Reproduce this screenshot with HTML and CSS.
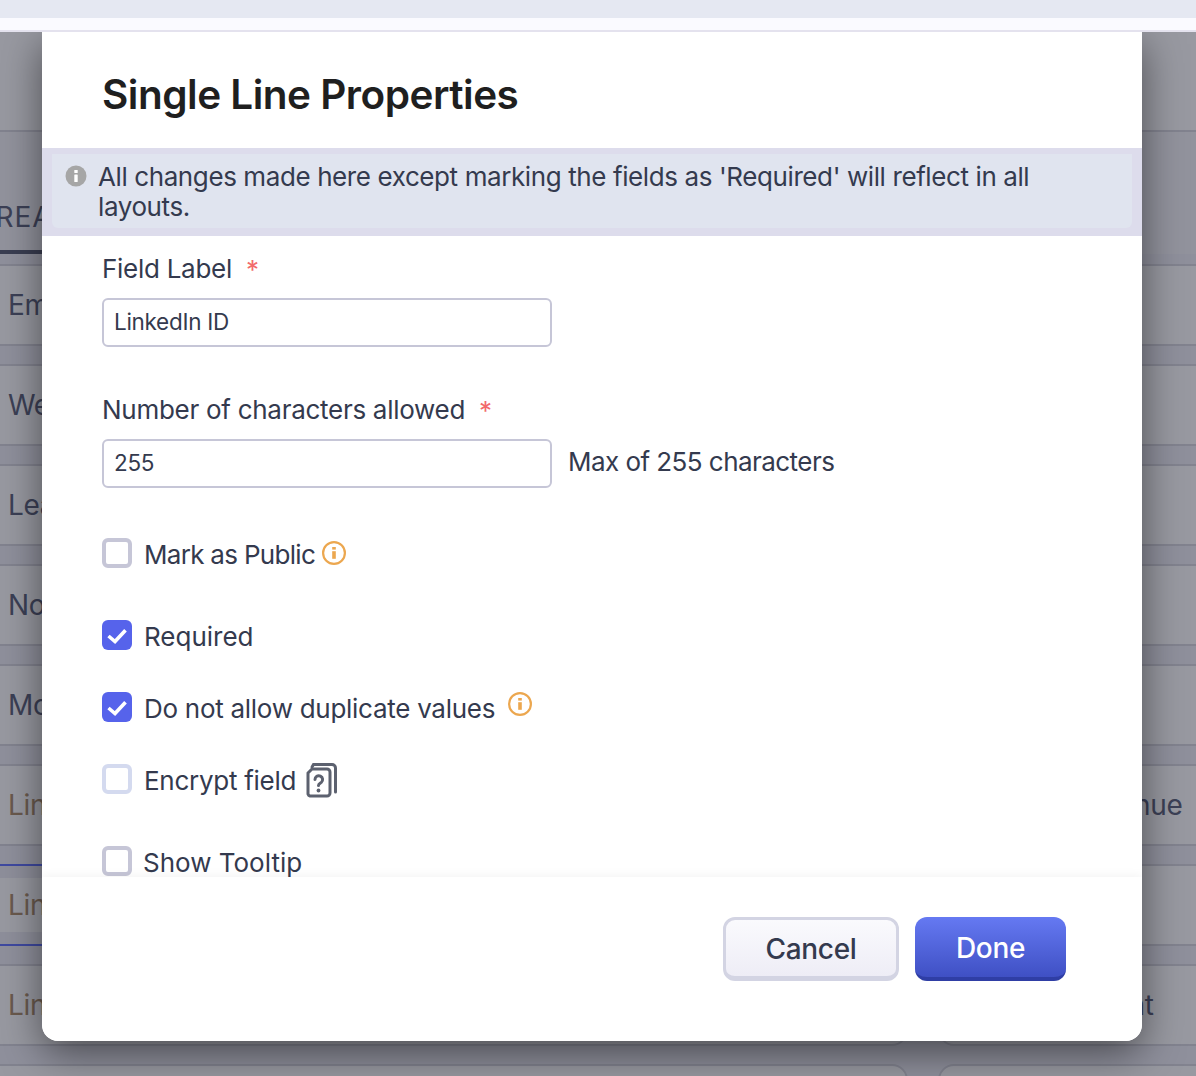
FILE: index.html
```html
<!DOCTYPE html>
<html lang="en">
<head>
<meta charset="utf-8">
<title>Single Line Properties</title>
<link rel="stylesheet" href="styles.css">
</head>
<body>
<div class="page">
  <div class="topbar"><div class="topbar-main"></div><div class="topbar-sub"></div></div>
  <div class="app">
    <div class="app-head"></div>
    <div class="tabs"><span class="tab">CREATE</span></div>
    <div class="grid">
      <div class="card"><span class="card-text">Email</span></div>
      <div class="card"></div>
      <div class="card"><span class="card-text">Website</span></div>
      <div class="card"></div>
      <div class="card"><span class="card-text">Lead Source</span></div>
      <div class="card"></div>
      <div class="card"><span class="card-text">Notes</span></div>
      <div class="card"></div>
      <div class="card"><span class="card-text">Mobile</span></div>
      <div class="card"></div>
      <div class="card"><span class="card-text link">Linked Deal</span></div>
      <div class="card"><span class="card-text">Annual Revenue</span></div>
      <div class="card active"><span class="card-chip"><span class="card-text link">LinkedIn ID</span></span></div>
      <div class="card"></div>
      <div class="card"><span class="card-text link">Linked Lead</span></div>
      <div class="card"><span class="card-text">Bank Account</span></div>
      <div class="card"></div>
      <div class="card"></div>
    </div>
  </div>
  <div class="overlay"></div>
  <div class="modal">
    <header class="modal-head"><h1 class="modal-title">Single Line Properties</h1></header>
    <div class="banner">
      <div class="banner-inner">
        <svg class="banner-icon" viewBox="0 0 22 22" aria-hidden="true"><circle cx="11" cy="11" r="10.5" fill="#a6a6a6"/><rect x="9.3" y="5" width="3.4" height="3" rx=".6" fill="#fff"/><rect x="9.3" y="9.5" width="3.4" height="7.5" rx=".6" fill="#fff"/></svg>
        <p class="banner-text">All changes made here except marking the fields as 'Required' will reflect in all layouts.</p>
      </div>
    </div>
    <div class="modal-body">
      <div class="field-label">Field Label<span class="star">*</span></div>
      <div class="field-row"><div class="input">LinkedIn ID</div></div>
      <div class="field-label second">Number of characters allowed<span class="star">*</span></div>
      <div class="field-row"><div class="input">255</div><span class="hint">Max of 255 characters</span></div>

      <div class="check-row gap-public">
        <span class="box"></span><span class="check-text tight">Mark as Public</span>
        <svg class="info info-public" viewBox="0 0 24 24" aria-hidden="true"><circle cx="12" cy="12" r="10.9" fill="none" stroke="#eca74f" stroke-width="2.2"/><rect x="10.2" y="6" width="3.6" height="2.6" fill="#eca74f"/><rect x="10.2" y="10.2" width="3.6" height="7.6" fill="#eca74f"/></svg>
      </div>
      <div class="check-row gap-required">
        <span class="box on"><svg viewBox="0 0 30 30" aria-hidden="true"><path d="M6.500 16 13 21.500 23.500 10.200" fill="none" stroke="#fff" stroke-width="3.600"/></svg></span><span class="check-text loose">Required</span>
      </div>
      <div class="check-row gap-small">
        <span class="box on"><svg viewBox="0 0 30 30" aria-hidden="true"><path d="M6.500 16 13 21.500 23.500 10.200" fill="none" stroke="#fff" stroke-width="3.600"/></svg></span><span class="check-text">Do not allow duplicate values</span>
        <svg class="info info-dup" viewBox="0 0 24 24" aria-hidden="true"><circle cx="12" cy="12" r="10.9" fill="none" stroke="#eca74f" stroke-width="2.2"/><rect x="10.2" y="6" width="3.6" height="2.6" fill="#eca74f"/><rect x="10.2" y="10.2" width="3.6" height="7.6" fill="#eca74f"/></svg>
      </div>
      <div class="check-row gap-small">
        <span class="box soft"></span><span class="check-text">Encrypt field</span>
        <svg class="help" viewBox="0 0 32 36" aria-hidden="true"><g fill="none" stroke="#5c616f" stroke-width="3" stroke-linecap="round"><path d="M3 11 7 7H22a3 3 0 0 1 3 3V31a3 3 0 0 1-3 3H5a3 3 0 0 1-2-2V11Z"/><path d="M7 5 8.500 2.500H27a3.500 3.500 0 0 1 3.500 3.500V30"/><path d="M10 17.500a3.800 3.800 0 1 1 6.300 2.900c-1.500 1.100-2.800 1.600-2.800 3.200"/></g><circle cx="13.500" cy="28.500" r="1.900" fill="#5c616f"/></svg>
      </div>
      <div class="check-row gap-required">
        <span class="box"></span><span class="check-text tooltip loose">Show Tooltip</span>
      </div>
    </div>
    <footer class="modal-foot">
      <button class="btn btn-cancel" type="button">Cancel</button>
      <button class="btn btn-done" type="button">Done</button>
    </footer>
  </div>
</div>
</body>
</html>
```
FILE: styles.css
```css
* { box-sizing: border-box; }
html, body { margin: 0; padding: 0; height: 100%; }
body { font-family: Inter, "Noto Sans", sans-serif; color: #343a4e; background: #fff; }

.page { position: relative; width: 1196px; height: 1076px; overflow: hidden; }

.topbar { position: relative; z-index: 3; height: 32px; background: #fafaff; border-bottom: 2px solid #e4e2ee; }
.topbar-main { height: 18px; background: #e5e8f2; }

.app { height: 1044px; overflow: hidden; background: #ececf4; color: #464d68; font-size: 28px; letter-spacing: -.3px; }
.app-head { height: 100px; background: #fff; border-bottom: 2px solid #d2d2da; }
.tabs { height: 122px; margin-left: -60px; background: #f2f2f6; display: flex; align-items: flex-end; }
.tab { padding: 0 8px 16px 34px; height: 122px; display: flex; align-items: flex-end; border-bottom: 4px solid #424860; letter-spacing: 1px; }
.grid { margin: 10px 0 0 -27px; width: 1900px; display: grid; grid-template-columns: 935px 935px; column-gap: 30px; row-gap: 20px; }
.card { height: 82px; margin-bottom: -2px; background: #fff; border: 2px solid #d2d2da; border-radius: 0 16px 16px 0; display: flex; align-items: center; padding-left: 33px; }
.card:nth-child(even) { border-radius: 16px 0 0 16px; }
.card.active { background: #eaeaf2; border-color: #4c60ff; padding-left: 0; }
.card-chip { display: flex; align-items: center; width: 100%; height: 54px; padding-left: 33px; background: #fff; border-radius: 10px; }
.card-text { line-height: 30px; }
.card-text.link { color: #a28058; }

.overlay { position: absolute; left: 0; right: 0; top: 32px; bottom: 0; z-index: 1; background: rgba(50, 52, 68, .5); }

.modal { position: absolute; z-index: 2; left: 42px; top: 32px; width: 1100px; height: 1009px; background: #fff; border-radius: 0 0 16px 16px; box-shadow: 0 12px 40px rgba(0, 0, 0, .5); display: flex; flex-direction: column; }

.modal-head { height: 116px; padding: 8px 60px 0; display: flex; align-items: center; flex: none; }
.modal-title { margin: 0; font-size: 40.5px; font-weight: 600; letter-spacing: -.5px; color: #1f1f1f; }

.banner { flex: none; height: 88px; padding: 6px 10px 8px; background: #dddcec; }
.banner-inner { height: 74px; background: #e0e4ef; border-radius: 0 0 6px 6px; padding: 8px 46px 0 13px; display: flex; align-items: flex-start; }
.banner-icon { width: 22px; height: 22px; flex: none; margin-top: 3px; margin-right: 11px; }
.banner-text { margin: 0; font-size: 26px; line-height: 30px; letter-spacing: -.4px; }

.modal-body { flex: 1; min-height: 0; overflow: hidden; padding: 18px 60px 0; font-size: 26px; letter-spacing: -.28px; }
.field-label { line-height: 30px; height: 30px; margin-bottom: 14px; display: flex; }
.field-label.second { margin-top: 48px; }
.star { color: #f26b6b; margin-left: 14px; font-size: 26px; padding-top: 1px; }
.field-row { display: flex; align-items: center; gap: 16px; }
.input { width: 450px; height: 49px; padding: 0 10px; border: 2px solid #c6c6d7; border-radius: 6px; font-size: 22.5px; line-height: 44px; letter-spacing: -.3px; }
.hint { line-height: 30px; margin-top: -4px; letter-spacing: -.55px; }

.check-row { display: flex; align-items: center; height: 30px; }
.gap-public { margin-top: 50px; }
.gap-required { margin-top: 52px; }
.gap-small { margin-top: 42px; }
.box { width: 30px; height: 30px; flex: none; border: 4px solid #c6c6d7; border-radius: 6px; background: #fff; margin-right: 12px; }
.box.soft { border-color: #d4daef; }
.box.on { border: 0; background: #5663eb; }
.box svg { display: block; width: 30px; height: 30px; }
.check-text { line-height: 30px; padding-top: 3px; }
.check-text.tight { letter-spacing: -.7px; }
.check-text.loose { letter-spacing: 0; }
.check-text.tooltip { margin-left: -1px; }
.info { width: 24px; height: 24px; flex: none; }
.info-public { margin-left: 7px; }
.info-dup { margin-left: 13px; margin-top: -6px; }
.help { width: 32px; height: 36px; flex: none; margin-left: 9px; margin-top: 2px; }

.modal-foot { position: relative; flex: none; height: 164px; padding: 40px 76px 0 0; display: flex; justify-content: flex-end; gap: 16px; align-items: flex-start; background: #fff; border-radius: 0 0 16px 16px; box-shadow: 0 -3px 8px rgba(0, 0, 0, .04); clip-path: inset(-12px 0 0 0 round 0 0 16px 16px); }
.btn { height: 64px; padding: 2px 0 0; font-family: inherit; font-size: 28px; font-weight: 500; letter-spacing: -.3px; border-radius: 12px; cursor: pointer; }
.btn-cancel { width: 176px; color: #343a4e; background: linear-gradient(#fafafd, #eeedf6); border: 3px solid #d3d4e3; border-bottom-width: 5px; }
.btn-done { width: 151px; color: #fff; background: linear-gradient(#6579f2, #3f50c4); border: 0; border-bottom: 4px solid #2f3ea5; }
```
